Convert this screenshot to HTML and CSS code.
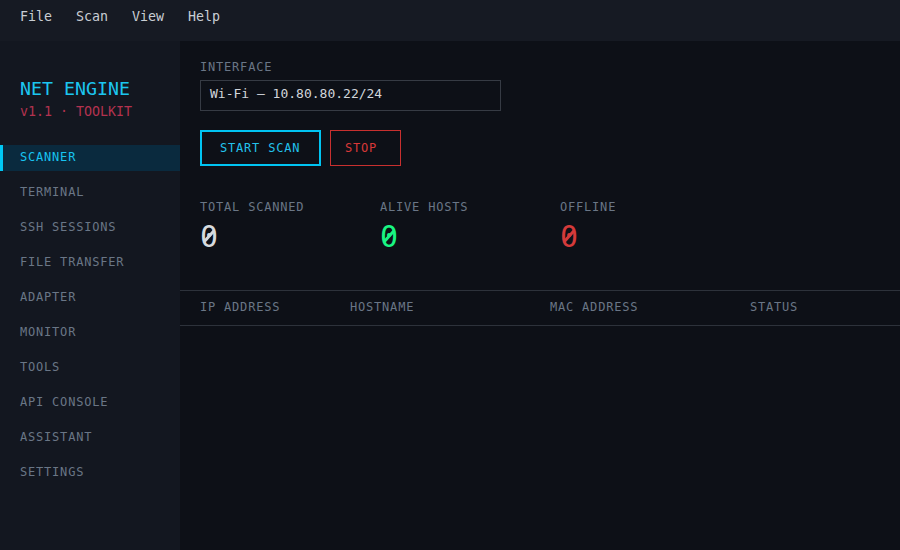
FILE: index.html
```html
<!DOCTYPE html>
<html>
<head>
<meta charset="utf-8">
<link rel="stylesheet" href="styles.css">
</head>
<body>
<div class="menubar">
  <span>File</span><span>Scan</span><span>View</span><span>Help</span>
</div>
<div class="app">
  <aside class="sidebar">
    <div class="brand">
      <div class="brand-title">NET ENGINE</div>
      <div class="brand-sub">v1.1 · TOOLKIT</div>
    </div>
    <nav class="nav">
      <div class="nav-item active">SCANNER</div>
      <div class="nav-item">TERMINAL</div>
      <div class="nav-item">SSH SESSIONS</div>
      <div class="nav-item">FILE TRANSFER</div>
      <div class="nav-item">ADAPTER</div>
      <div class="nav-item">MONITOR</div>
      <div class="nav-item">TOOLS</div>
      <div class="nav-item">API CONSOLE</div>
      <div class="nav-item">ASSISTANT</div>
      <div class="nav-item">SETTINGS</div>
    </nav>
  </aside>
  <main class="main">
    <div class="controls">
      <div class="label">INTERFACE</div>
      <div class="select">Wi-Fi — 10.80.80.22/24</div>
      <div class="buttons">
        <button class="btn btn-start">START SCAN</button>
        <button class="btn btn-stop">STOP</button>
      </div>
    </div>
    <div class="stats">
      <div class="stat">
        <div class="label">TOTAL SCANNED</div>
        <div class="stat-value total"><span class="num">0</span></div>
      </div>
      <div class="stat">
        <div class="label">ALIVE HOSTS</div>
        <div class="stat-value alive"><span class="num">0</span></div>
      </div>
      <div class="stat">
        <div class="label">OFFLINE</div>
        <div class="stat-value offline"><span class="num">0</span></div>
      </div>
    </div>
    <div class="table-head">
      <div class="col c1">IP ADDRESS</div>
      <div class="col c2">HOSTNAME</div>
      <div class="col c3">MAC ADDRESS</div>
      <div class="col c4">STATUS</div>
    </div>
  </main>
</div>
</body>
</html>
```
FILE: styles.css
```css
* { box-sizing: border-box; }
html, body { margin: 0; padding: 0; height: 100%; }
body {
  font-family: "DejaVu Sans Mono", "Liberation Mono", monospace;
  background: #0d1017;
  color: #c8ccd4;
  overflow: hidden;
}
.menubar {
  height: 41px;
  background: #161a23;
  display: flex;
  gap: 24px;
  padding: 8px 20px 0;
  font-size: 13.3px;
  line-height: 17px;
  color: #c9cdd4;
}
.app {
  display: flex;
  height: calc(100% - 41px);
}
.sidebar {
  width: 180px;
  background: #131720;
  padding-top: 37px;
}
.brand { padding: 0 20px; }
.brand-title {
  font-size: 18.3px;
  line-height: 22px;
  color: #1cc6f0;
}
.brand-sub {
  font-size: 13.3px;
  line-height: 20px;
  color: #b3324f;
  margin-top: 2px;
}
.nav {
  margin-top: 23px;
  display: flex;
  flex-direction: column;
  gap: 9px;
}
.nav-item {
  height: 26px;
  line-height: 24px;
  padding-left: 20px;
  font-size: 12px;
  letter-spacing: 0.8px;
  color: #6a7686;
}
.nav-item.active {
  background: #0a2a3e;
  color: #17c4f0;
  border-left: 3px solid #00c8f5;
  padding-left: 17px;
}
.main {
  flex: 1;
  display: flex;
  flex-direction: column;
}
.controls { padding: 18px 20px 0; }
.label {
  font-size: 12px;
  letter-spacing: 0.8px;
  line-height: 16px;
  color: #6a7686;
}
.select {
  margin-top: 5px;
  width: 301px;
  height: 31px;
  border: 1px solid #363b44;
  padding: 4px 9px;
  font-size: 13px;
  line-height: 18px;
  color: #d2d6dc;
}
.buttons {
  display: flex;
  gap: 9px;
  margin-top: 19px;
}
.btn {
  font-family: "DejaVu Sans Mono", "Liberation Mono", monospace;
  background: transparent;
  height: 36px;
  font-size: 12px;
  letter-spacing: 0.8px;
  cursor: pointer;
}
.btn-start {
  width: 121px;
  border: 2px solid #00c4f2;
  color: #22c2ec;
  padding: 0 0 0 18px;
  text-align: left;
}
.btn-stop {
  width: 71px;
  border: 1px solid #c8302f;
  color: #d83838;
  padding: 0 0 0 14px;
  text-align: left;
}
.stats {
  display: flex;
  padding: 33px 20px 0;
}
.stat { width: 180px; }
.stat-value {
  font-size: 30px;
  line-height: 36px;
  margin-top: 4px;
}
.num {
  position: relative;
  display: inline-block;
}
.num::after {
  content: "";
  position: absolute;
  left: 50%;
  top: 48%;
  width: 2.5px;
  height: 15px;
  background: currentColor;
  transform: translate(-50%, -50%) rotate(42deg);
}
.total { color: #d6dade; }
.alive { color: #19f582; }
.offline { color: #d43a3a; }
.table-head {
  margin-top: 35px;
  height: 36px;
  border-top: 1px solid #2d323b;
  border-bottom: 1px solid #2d323b;
  display: flex;
  align-items: center;
  padding: 0 0 2px 20px;
  font-size: 12px;
  letter-spacing: 0.8px;
  color: #6a7686;
}
.c1 { width: 150px; }
.c2 { width: 200px; }
.c3 { width: 200px; }
.c4 { flex: 1; }
```
